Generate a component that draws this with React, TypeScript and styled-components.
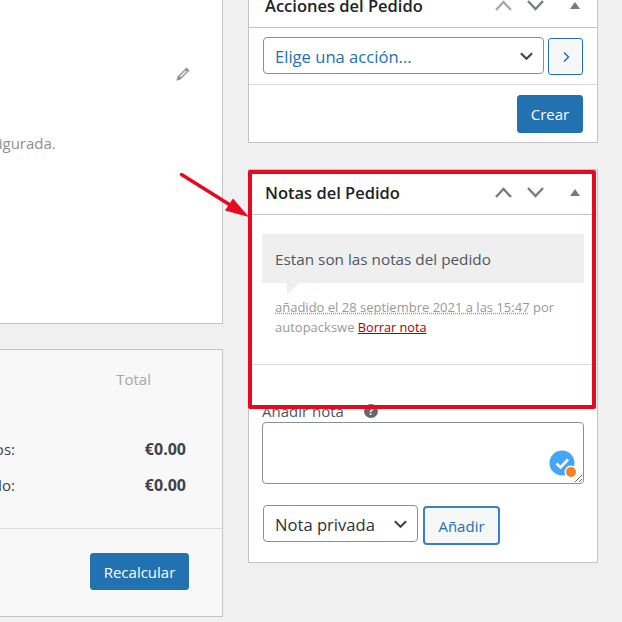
import styled, { createGlobalStyle } from "styled-components";

const chevron = "data:image/svg+xml,%3Csvg xmlns='http://www.w3.org/2000/svg' viewBox='0 0 16 10'%3E%3Cpath d='M2 2l6 6 6-6' fill='none' stroke='%23444' stroke-width='2.2'/%3E%3C/svg%3E";

const GlobalStyle = createGlobalStyle`
  * { box-sizing: border-box; }
  html, body { margin: 0; background: #f0f0f1; }
  body { font-family: "Open Sans", "Noto Sans", sans-serif; color: #3c434a; }
`;

const Page = styled.div`
  position: relative;
  display: flex;
  gap: 25px;
  width: 622px;
  height: 622px;
  overflow: hidden;
`;

const MainColumn = styled.div`
  flex: none;
  display: flex;
  flex-direction: column;
  gap: 25px;
  width: 703px;
  margin: -20px 0 0 -480px;
`;

const Panel = styled.section<{ $muted?: boolean }>`
  background: ${(p) => (p.$muted ? "#f8f8f8" : "#fff")};
  border: 1px solid #c3c4c7;
`;

const AddressPanel = styled(Panel)`
  height: 344px;
  display: flex;
  justify-content: flex-end;
  padding: 86px 32px 0 0;
`;

const AddressColumn = styled.div`
  width: 406px;
`;

const EditRow = styled.div`
  display: flex;
  justify-content: flex-end;
  height: 66px;
`;

const AddressNote = styled.p`
  margin: 0;
  font-size: 15px;
  line-height: 20px;
  color: #8f8f8f;
  white-space: nowrap;
`;

const TotalsPanel = styled(Panel)`
  height: 268px;
`;

const TotalHeading = styled.div`
  display: flex;
  justify-content: flex-end;
  height: 81px;
  padding: 19px 71px 0 0;
  font-size: 15px;
  line-height: 20px;
  color: #a7a7a7;
`;

const TotalRow = styled.div`
  display: grid;
  grid-template-columns: 1fr 171px;
  align-items: center;
  height: 36px;
  padding-right: 36px;
  font-size: 15px;
`;

const TotalLabel = styled.span`
  text-align: right;
`;

const TotalValue = styled.strong`
  text-align: right;
  font-size: 16px;
  font-weight: 700;
`;

const TotalsFooter = styled.div`
  display: flex;
  justify-content: flex-end;
  margin-top: 25px;
  padding: 24px 33px 0 0;
  border-top: 1px solid #dcdcde;
`;

const PrimaryButton = styled.button<{ $w: number; $h: number }>`
  width: ${(p) => p.$w}px;
  height: ${(p) => p.$h}px;
  padding: 0;
  border: 1px solid #2271b1;
  border-radius: 3px;
  background: #2271b1;
  color: #fff;
  font: 15px "Open Sans", sans-serif;
`;

const Sidebar = styled.div`
  flex: none;
  display: flex;
  flex-direction: column;
  gap: 26px;
  width: 350px;
  margin-top: -18px;
`;

const PanelHeader = styled.header`
  display: flex;
  align-items: center;
  justify-content: space-between;
  height: 45px;
  padding: 0 17px 0 16px;
  border-bottom: 1px solid #c3c4c7;
`;

const PanelTitle = styled.h2`
  margin: 0;
  font-size: 16.5px;
  font-weight: 600;
  color: #1d2327;
`;

const HeaderIcons = styled.div`
  display: flex;
  align-items: center;
  gap: 15px;
`;

const HeaderIcon = styled.svg<{ $dim?: boolean }>`
  display: block;
  width: 17px;
  height: 11px;
  fill: none;
  stroke: ${(p) => (p.$dim ? "#a7aaad" : "#787c82")};
  stroke-width: 2.4;
`;

const Caret = styled.svg`
  display: block;
  width: 10px;
  height: 7px;
  margin-left: 11px;
  fill: #787c82;
`;

const ActionRow = styled.div`
  display: flex;
  align-items: flex-start;
  gap: 4px;
  height: 57px;
  padding: 9px 14px 0;
  border-bottom: 1px solid #dcdcde;
`;

const Select = styled.select<{ $w: number; $blue?: boolean }>`
  appearance: none;
  width: ${(p) => p.$w}px;
  height: 37px;
  padding: 2px 30px 0 11px;
  border: 1px solid #8c8f94;
  border-radius: 4px;
  color: ${(p) => (p.$blue ? "#2271b1" : "#2c3338")};
  font: 16.6px "Open Sans", sans-serif;
  background: #fff url("${chevron}") no-repeat right 9px center / 15px 10px;
`;

const GoButton = styled.button`
  display: flex;
  align-items: center;
  justify-content: center;
  width: 35px;
  height: 37px;
  margin-top: 1px;
  padding: 0;
  border: 1px solid #2271b1;
  border-radius: 3px;
  background: #f6f7f7;
  color: #2271b1;
`;

const ActionFooter = styled.div`
  display: flex;
  justify-content: flex-end;
  height: 57px;
  padding: 10px 14px 0;
`;

const NotesBody = styled.div`
  padding-top: 19px;
`;

const NoteBubble = styled.div`
  position: relative;
  height: 49px;
  margin: 0 13px;
  padding: 0 13px;
  background: #efefef;
  font-size: 15.3px;
  line-height: 51px;
  color: #50575e;

  &::after {
    content: "";
    position: absolute;
    left: 25px;
    top: 100%;
    border-style: solid;
    border-width: 12px 12px 0 0;
    border-color: #efefef transparent transparent transparent;
  }
`;

const NoteMeta = styled.p`
  height: 82px;
  margin: 0;
  padding: 14px 26px 0;
  border-bottom: 1px solid #dcdcde;
  font-size: 13px;
  line-height: 20px;
  color: #999;
`;

const NoteDate = styled.abbr`
  text-decoration: underline dotted;
`;

const DeleteLink = styled.a`
  color: #a00;
  font-size: 12.7px;
  text-decoration: underline;
`;

const AddNote = styled.div`
  padding: 35px 13px 0;
  height: 197px;
`;

const NoteLabel = styled.div`
  display: flex;
  align-items: center;
  gap: 20px;
  height: 21px;
  font-size: 15px;
  color: #50575e;
`;

const HelpIcon = styled.span`
  width: 14px;
  height: 14px;
  border-radius: 50%;
  background: #646970;
  color: #fff;
  font-size: 10px;
  font-weight: 700;
  line-height: 14px;
  text-align: center;
`;

const TextareaWrap = styled.div`
  position: relative;
  margin-top: 1px;
`;

const NoteInput = styled.textarea`
  display: block;
  width: 322px;
  height: 62px;
  border: 1px solid #8c8f94;
  border-radius: 4px;
  background: #fff;
`;

const AssistBadge = styled.svg`
  position: absolute;
  right: 5px;
  bottom: 4px;
  width: 30px;
  height: 30px;
`;

const SubmitRow = styled.div`
  display: flex;
  align-items: flex-start;
  gap: 5px;
  margin-top: 21px;
  padding-left: 1px;
`;

const SecondaryButton = styled.button`
  width: 77px;
  height: 39px;
  margin-top: 1px;
  padding: 0;
  border: 2px solid #3582c4;
  border-radius: 4px;
  background: #f6f7f7;
  color: #2271b1;
  font: 15px "Open Sans", sans-serif;
`;

const Highlight = styled.div`
  position: absolute;
  left: 248px;
  top: 170px;
  width: 348px;
  height: 239px;
  border: 4px solid #e60a1e;
  border-radius: 2px;
  pointer-events: none;
`;

const Arrow = styled.svg`
  position: absolute;
  left: 175px;
  top: 168px;
  width: 80px;
  height: 55px;
`;

const PanelControls = ({ dim }: { dim?: boolean }) => (
  <HeaderIcons>
    <HeaderIcon $dim={dim} viewBox="0 0 17 11"><path d="M1 10l7.500-8 7.500 8" /></HeaderIcon>
    <HeaderIcon viewBox="0 0 17 11"><path d="M1 1l7.500 8 7.500-8" /></HeaderIcon>
    <Caret viewBox="0 0 10 7"><path d="M5 0l5 7H0z" /></Caret>
  </HeaderIcons>
);

const App = () => (
  <Page>
    <GlobalStyle />
    <MainColumn>
      <AddressPanel>
        <AddressColumn>
          <EditRow>
            <svg width="14" height="14" viewBox="0 0 14 14">
              <path d="M10.500.5l3 3-9 9-4.200 1.200 1.200-4.200z" fill="#8f9297" />
              <path d="M9.300 3.200l1.500 1.500-5.800 5.800-1.500-1.500z" fill="#fff" opacity=".7" />
            </svg>
          </EditRow>
          <AddressNote>No hay dirección de envío configurada.</AddressNote>
        </AddressColumn>
      </AddressPanel>
      <TotalsPanel $muted>
        <TotalHeading>Total</TotalHeading>
        <TotalRow>
          <TotalLabel>Artículos:</TotalLabel>
          <TotalValue>€0.00</TotalValue>
        </TotalRow>
        <TotalRow>
          <TotalLabel>Total Pedido:</TotalLabel>
          <TotalValue>€0.00</TotalValue>
        </TotalRow>
        <TotalsFooter>
          <PrimaryButton $w={99} $h={37}>Recalcular</PrimaryButton>
        </TotalsFooter>
      </TotalsPanel>
    </MainColumn>

    <Sidebar>
      <Panel>
        <PanelHeader>
          <PanelTitle>Acciones del Pedido</PanelTitle>
          <PanelControls dim />
        </PanelHeader>
        <ActionRow>
          <Select $w={281} $blue defaultValue="">
            <option value="">Elige una acción...</option>
          </Select>
          <GoButton>
            <svg width="10" height="14" viewBox="0 0 10 14" fill="none" stroke="currentColor" strokeWidth="1.500">
              <path d="M3 2.500l4.500 4.500-4.500 4.500" />
            </svg>
          </GoButton>
        </ActionRow>
        <ActionFooter>
          <PrimaryButton $w={66} $h={38}>Crear</PrimaryButton>
        </ActionFooter>
      </Panel>

      <Panel>
        <PanelHeader>
          <PanelTitle>Notas del Pedido</PanelTitle>
          <PanelControls />
        </PanelHeader>
        <NotesBody>
          <NoteBubble>Estan son las notas del pedido</NoteBubble>
          <NoteMeta>
            <NoteDate>añadido el 28 septiembre 2021 a las 15:47</NoteDate> por autopackswe{" "}
            <DeleteLink href="#">Borrar nota</DeleteLink>
          </NoteMeta>
          <AddNote>
            <NoteLabel>
              Añadir nota
              <HelpIcon>?</HelpIcon>
            </NoteLabel>
            <TextareaWrap>
              <NoteInput />
              <AssistBadge viewBox="0 0 30 30">
                <circle cx="13" cy="13" r="12.500" fill="#45a5f5" />
                <path d="M7.500 13.500l4 4 7.500-8" fill="none" stroke="#fff" strokeWidth="2.600" />
                <circle cx="22" cy="22" r="6.500" fill="#fff" />
                <circle cx="22" cy="22" r="5" fill="#f5822a" />
              </AssistBadge>
            </TextareaWrap>
            <SubmitRow>
              <Select $w={155} defaultValue="private">
                <option value="private">Nota privada</option>
              </Select>
              <SecondaryButton>Añadir</SecondaryButton>
            </SubmitRow>
          </AddNote>
        </NotesBody>
      </Panel>
    </Sidebar>

    <Arrow viewBox="0 0 80 55">
      <path d="M6.500 6.500L60 40" stroke="#e60a1e" strokeWidth="3.500" strokeLinecap="round" />
      <path d="M74 49L50 42.500 58 30.500z" fill="#e60a1e" />
    </Arrow>
    <Highlight />
  </Page>
);

export default App;
